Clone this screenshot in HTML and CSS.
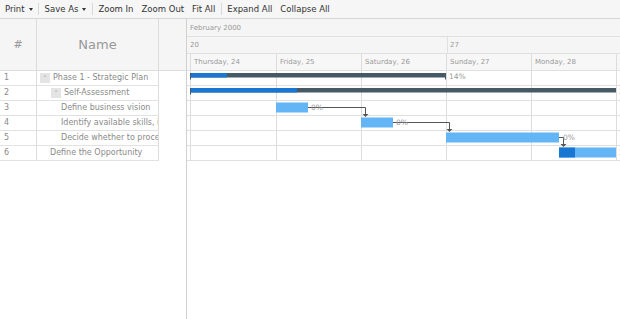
FILE: index.html
```html
<!DOCTYPE html>
<html>
<head>
    <title>Project Gantt</title>
    <link rel="stylesheet" href="styles.css">
</head>
<body>
    <div class="toolbar">
        <span class="tool">Print <i class="caret"></i></span>
        <span class="sep"></span>
        <span class="tool">Save As <i class="caret"></i></span>
        <span class="sep"></span>
        <span class="tool">Zoom In</span>
        <span class="tool">Zoom Out</span>
        <span class="tool">Fit All</span>
        <span class="sep"></span>
        <span class="tool">Expand All</span>
        <span class="tool">Collapse All</span>
    </div>

    <div class="gantt">
        <div class="grid">
            <div class="grid-head">
                <div class="gh-num">#</div>
                <div class="gh-name">Name</div>
                <div class="gh-pad"></div>
            </div>
            <div class="grid-row">
                <div class="cell-num">1</div>
                <div class="cell-name lvl0"><span class="toggle">-</span>Phase 1 - Strategic Plan</div>
            </div>
            <div class="grid-row">
                <div class="cell-num">2</div>
                <div class="cell-name lvl1"><span class="toggle">-</span>Self-Assessment</div>
            </div>
            <div class="grid-row">
                <div class="cell-num">3</div>
                <div class="cell-name leaf2">Define business vision</div>
            </div>
            <div class="grid-row">
                <div class="cell-num">4</div>
                <div class="cell-name leaf2">Identify available skills, information and support</div>
            </div>
            <div class="grid-row">
                <div class="cell-num">5</div>
                <div class="cell-name leaf2">Decide whether to proceed</div>
            </div>
            <div class="grid-row">
                <div class="cell-num">6</div>
                <div class="cell-name leaf1">Define the Opportunity</div>
            </div>
        </div>

        <div class="splitter"></div>

        <div class="timeline">
            <div class="tl-month">February 2000</div>
            <div class="tl-weeks">
                <div class="week w20">20</div>
                <div class="week">27</div>
            </div>
            <div class="tl-days">
                <div class="day">Thursday, 24</div>
                <div class="day">Friday, 25</div>
                <div class="day">Saturday, 26</div>
                <div class="day">Sunday, 27</div>
                <div class="day">Monday, 28</div>
                <div class="day">Tuesday, 29</div>
            </div>
            <div class="tl-body">
                <div class="tl-row"><div class="day"></div><div class="day"></div><div class="day"></div><div class="day"></div><div class="day"></div><div class="day"></div></div>
                <div class="tl-row"><div class="day"></div><div class="day"></div><div class="day"></div><div class="day"></div><div class="day"></div><div class="day"></div></div>
                <div class="tl-row"><div class="day"></div><div class="day"></div><div class="day"></div><div class="day"></div><div class="day"></div><div class="day"></div></div>
                <div class="tl-row"><div class="day"></div><div class="day"></div><div class="day"></div><div class="day"></div><div class="day"></div><div class="day"></div></div>
                <div class="tl-row"><div class="day"></div><div class="day"></div><div class="day"></div><div class="day"></div><div class="day"></div><div class="day"></div></div>
                <div class="tl-row"><div class="day"></div><div class="day"></div><div class="day"></div><div class="day"></div><div class="day"></div><div class="day"></div></div>

                <!-- bars and connectors, coordinates on the time axis -->
                <svg class="bars" width="440" height="100">
                    <g class="conn">
                        <path d="M121 37.5H178.5V44"/>
                        <path d="M206 52.5H262.5V59"/>
                        <path d="M372 67.5H376.5V74"/>
                    </g>
                    <g class="arrow">
                        <polygon points="175.5,44 181.5,44 178.5,47"/>
                        <polygon points="259.5,59 265.5,59 262.5,62"/>
                        <polygon points="373.5,74 379.5,74 376.5,77"/>
                    </g>

                    <rect class="summary" x="3" y="3" width="256" height="4.5"/>
                    <rect class="summary" x="3" y="3" width="1" height="6.5"/>
                    <rect class="summary" x="258" y="3" width="1" height="6.5"/>
                    <rect class="progress" x="4" y="3" width="36" height="4.5"/>
                    <text x="262" y="8.5">14%</text>

                    <rect class="summary" x="3" y="18" width="426" height="4.5"/>
                    <rect class="summary" x="3" y="18" width="1" height="6.5"/>
                    <rect class="progress" x="4" y="18" width="106" height="4.5"/>
                    <text x="432" y="23.5">25%</text>

                    <rect class="task" x="89" y="32.5" width="32" height="10"/>
                    <text x="124" y="40">0%</text>

                    <rect class="task" x="174" y="47.5" width="32" height="10"/>
                    <text x="209" y="55">0%</text>

                    <rect class="task" x="259" y="62.5" width="113" height="10"/>
                    <text x="376" y="70">0%</text>

                    <rect class="task" x="372" y="77.5" width="57" height="10"/>
                    <rect class="progress" x="372" y="77.5" width="16" height="10"/>
                    <text x="432" y="85">28%</text>
                </svg>
            </div>
        </div>
    </div>
</body>
</html>
```

FILE: styles.css
```css
body {
    margin: 0;
    font-family: "DejaVu Sans", sans-serif;
    background-color: #fff;
    height: 319px;
    overflow: hidden;
}

.toolbar {
    display: flex;
    align-items: center;
    height: 18px;
    padding-left: 1px;
    background-color: #f6f6f6;
    border-bottom: 1px solid #d6d6d6;
    font-size: 8.5px;
    color: #333;
}

.tool {
    display: flex;
    align-items: center;
    gap: 4px;
    padding: 0 4px;
    white-space: nowrap;
}

.caret {
    border-left: 2.5px solid transparent;
    border-right: 2.5px solid transparent;
    border-top: 3px solid #333;
}

.sep {
    width: 1px;
    height: 12px;
    margin: 0 1.5px;
    background-color: #d8d8d8;
}

.gantt {
    display: flex;
    height: 300px;
}

/* data grid */
.grid {
    width: 186px;
    flex: none;
}

.grid-head {
    display: flex;
    height: 51px;
    background-color: #f5f5f5;
    border-bottom: 1px solid #dcdcdc;
    color: #999;
}

.gh-num,
.gh-name {
    display: flex;
    align-items: center;
    justify-content: center;
    border-right: 1px solid #dcdcdc;
}

.gh-num {
    width: 36px;
    font-size: 11px;
}

.gh-name {
    width: 121px;
    font-size: 13px;
}

.gh-pad {
    flex: 1;
}

.grid-row {
    display: flex;
    width: 159px;
    height: 14px;
    border-bottom: 1px solid #e2e2e2;
    font-size: 8px;
    line-height: 14px;
    color: #8a8a8a;
}

.cell-num {
    width: 32px;
    padding-left: 4px;
    border-right: 1px solid #dcdcdc;
}

.cell-name {
    display: flex;
    align-items: center;
    width: 121px;
    border-right: 1px solid #dcdcdc;
    overflow: hidden;
    white-space: nowrap;
}

.lvl0 { padding-left: 3px; width: 118px; }
.lvl1 { padding-left: 14px; width: 107px; }
.leaf1 { padding-left: 13px; width: 108px; }
.leaf2 { padding-left: 24px; width: 97px; }

.toggle {
    flex: none;
    width: 10px;
    height: 10px;
    margin-right: 3px;
    background-color: #e4e4e4;
    color: #777;
    font-size: 7px;
    line-height: 7px;
    text-align: center;
}

.splitter {
    width: 1px;
    flex: none;
    background-color: #d0d0d0;
}

/* timeline */
.timeline {
    flex: 1;
    overflow: hidden;
    font-size: 7px;
    color: #999;
}

.tl-month {
    height: 17px;
    line-height: 19px;
    padding-left: 3px;
    background-color: #f5f5f5;
    border-bottom: 1px solid #e0e0e0;
}

.tl-weeks {
    display: flex;
    height: 16px;
    line-height: 17px;
    background-color: #f5f5f5;
    border-bottom: 1px solid #e0e0e0;
}

.week {
    flex: none;
    padding-left: 2px;
}

.w20 {
    width: 257px;
    padding-left: 3px;
    border-right: 1px solid #e0e0e0;
}

.tl-days,
.tl-row {
    display: flex;
    padding-left: 3px;
    border-bottom: 1px solid #e0e0e0;
}

.tl-days {
    height: 16px;
    line-height: 17px;
    background-color: #f7f7f7;
}

.tl-row {
    height: 14px;
}

.day {
    flex: none;
    box-sizing: border-box;
    width: 85px;
    padding-left: 3px;
    border-left: 1px solid #dcdcdc;
    white-space: nowrap;
}

.day:first-child {
    width: 86px;
}

.tl-body {
    position: relative;
}

.bars {
    position: absolute;
    left: 0;
    top: -1px;
    font-family: "DejaVu Sans", sans-serif;
    font-size: 7.5px;
}

.bars text {
    fill: #999;
}

.conn path {
    fill: none;
    stroke: #555;
    stroke-width: 1;
}

.arrow polygon {
    fill: #555;
}

.summary {
    fill: #455a64;
}

.progress {
    fill: #1976d2;
}

.task {
    fill: #64b5f6;
}
```
